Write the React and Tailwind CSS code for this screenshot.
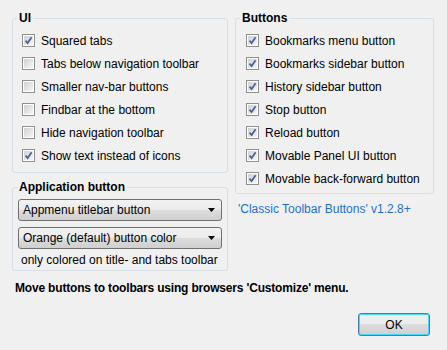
const uiOptions = [
  { label: 'Squared tabs', checked: true },
  { label: 'Tabs below navigation toolbar', checked: false },
  { label: 'Smaller nav-bar buttons', checked: false },
  { label: 'Findbar at the bottom', checked: false },
  { label: 'Hide navigation toolbar', checked: false },
  { label: 'Show text instead of icons', checked: true },
]

const buttonOptions = [
  'Bookmarks menu button',
  'Bookmarks sidebar button',
  'History sidebar button',
  'Stop button',
  'Reload button',
  'Movable Panel UI button',
  'Movable back-forward button',
]

function CheckBox({ checked }) {
  return (
    <span className="w-[13px] h-[13px] shrink-0 border border-[#8e8f8f] bg-white p-px">
      <span className="relative block w-full h-full bg-gradient-to-br from-[#cfd1d4] to-[#f6f6f6]">
        {checked && (
          <svg viewBox="0 0 9 9" className="absolute inset-0 w-[9px] h-[9px]">
            <path d="M1.5 4.6 L3.6 7 L7.6 1.2" fill="none" stroke="#4a5f97" strokeWidth="1.7" />
          </svg>
        )}
      </span>
    </span>
  )
}

function CheckRow({ label, checked }) {
  return (
    <div className="h-[23px] flex items-center gap-[6px]">
      <CheckBox checked={checked} />
      <span>{label}</span>
    </div>
  )
}

function Group({ title, className, children }) {
  return (
    <fieldset className={`border border-[#d5dfe5] rounded-[3px] p-0 ${className}`}>
      <legend className="ml-[4px] px-[2px] font-bold leading-[14px]">{title}</legend>
      {children}
    </fieldset>
  )
}

function Select({ value }) {
  return (
    <div className="h-[22px] flex items-center justify-between border border-[#707070] rounded-[3px] bg-[linear-gradient(#f2f2f2_0%,#ebebeb_50%,#dddddd_50%,#cfcfcf_100%)] pl-[4px] pr-[6px]">
      <span>{value}</span>
      <svg viewBox="0 0 7 4" className="w-[7px] h-[4px]">
        <path d="M0 0 H7 L3.5 4 Z" fill="#000" />
      </svg>
    </div>
  )
}

export default function App() {
  return (
    <div className="w-[447px] h-[350px] bg-[#f0f0f0] text-[12px] text-black font-['Liberation_Sans',Arial,sans-serif] leading-[14px] pt-[11px] relative">
      <div className="flex gap-[7px] pl-[12px]">
        <div className="w-[216px]">
          <Group title="UI">
            <div className="pl-[9px] pt-[4px] pb-[5px]">
              {uiOptions.map((o) => (
                <CheckRow key={o.label} label={o.label} checked={o.checked} />
              ))}
            </div>
          </Group>
          <Group title="Application button" className="mt-[7px]">
            <div className="px-[5px] pt-[5px] pb-[3px] flex flex-col">
              <Select value="Appmenu titlebar button" />
              <div className="mt-[6px]">
                <Select value="Orange (default) button color" />
              </div>
              <div className="mt-[4px] pl-[3px]">only colored on title- and tabs toolbar</div>
            </div>
          </Group>
        </div>
        <div className="w-[199px]">
          <Group title="Buttons">
            <div className="pl-[10px] pt-[4px] pb-[3px]">
              {buttonOptions.map((b) => (
                <CheckRow key={b} label={b} checked />
              ))}
            </div>
          </Group>
          <div className="mt-[8px] pl-[3px] text-[#1e6fd0]">'Classic Toolbar Buttons' v1.2.8+</div>
        </div>
      </div>
      <div className="mt-[10px] pl-[15px] font-bold tracking-[-0.18px]">
        Move buttons to toolbars using browsers 'Customize' menu.
      </div>
      <div className="flex justify-end pr-[17px] mt-[18px]">
        <button className="w-[72px] h-[23px] rounded-[3px] border border-[#3c7fb1] shadow-[inset_0_0_0_1px_#48d8fb] bg-[linear-gradient(#f2f2f2_0%,#ebebeb_50%,#dddddd_50%,#cfcfcf_100%)]">
          OK
        </button>
      </div>
    </div>
  )
}
